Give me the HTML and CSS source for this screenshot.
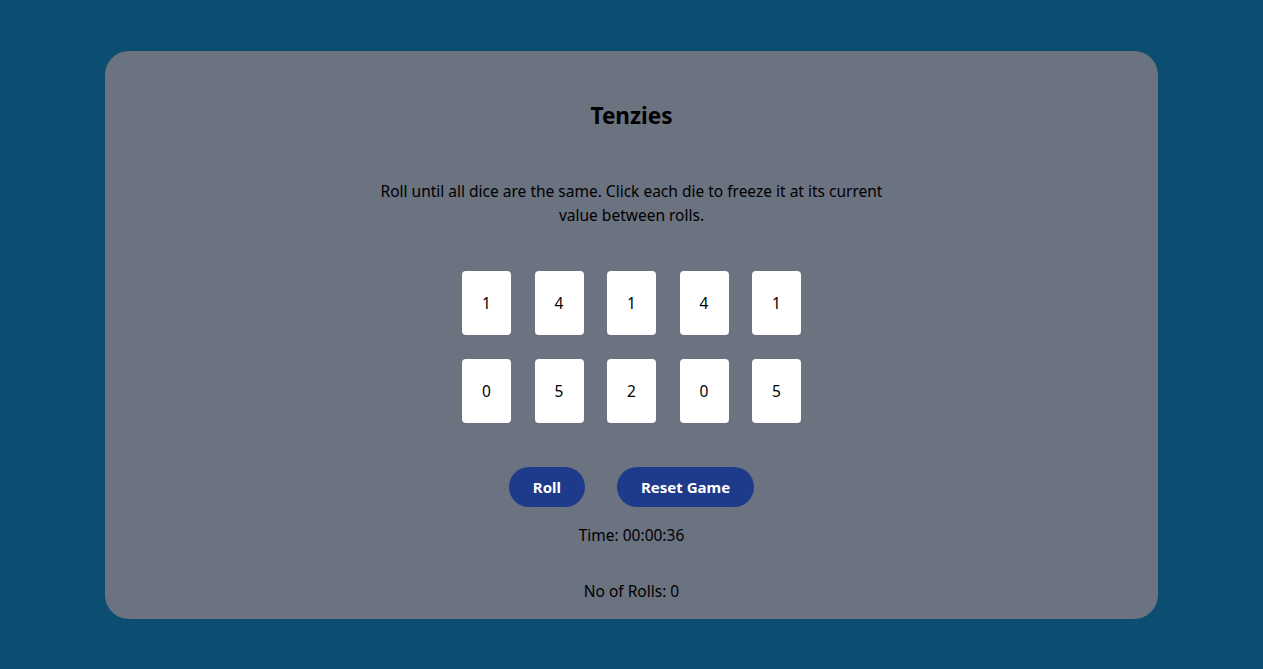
FILE: index.html
```html
<!DOCTYPE html>
<html lang="en">

<head>
    <meta charset="UTF-8">
    <meta name="viewport" content="width=device-width, initial-scale=1.0">
    <title>Tenzies</title>
    <link rel="stylesheet" href="styles.css">
</head>

<body>
    <main class="board">
        <h1 class="title">Tenzies</h1>
        <p class="intro">Roll until all dice are the same. Click each die to freeze it at its current value between rolls.</p>
        <div class="dice">
            <div class="die">1</div>
            <div class="die">4</div>
            <div class="die">1</div>
            <div class="die">4</div>
            <div class="die">1</div>
            <div class="die">0</div>
            <div class="die">5</div>
            <div class="die">2</div>
            <div class="die">0</div>
            <div class="die">5</div>
        </div>
        <div class="actions">
            <button class="btn">Roll</button>
            <button class="btn">Reset Game</button>
        </div>
        <p class="stat">Time: 00:00:36</p>
        <p class="stat rolls">No of Rolls: 0</p>
    </main>
</body>

</html>
```

FILE: styles.css
```css
* {
    box-sizing: border-box;
}

body {
    margin: 0;
    padding: 51px 105px 50px;
    background-color: #0c4e72;
    font-family: "Noto Sans", "Open Sans", sans-serif;
    color: #000000;
}

.board {
    height: 568px;
    background-color: #6b7280;
    border-radius: 24px;
    display: flex;
    flex-direction: column;
    align-items: center;
    padding-top: 50px;
}

.title {
    margin: 0;
    font-size: 22.5px;
    line-height: 30px;
    font-weight: 700;
}

.intro {
    margin: 48px 0 0;
    max-width: 530px;
    text-align: center;
    font-size: 15.5px;
    line-height: 24px;
}

.dice {
    margin-top: 44px;
    display: grid;
    grid-template-columns: repeat(5, 49px);
    column-gap: 23.5px;
    row-gap: 24px;
}

.die {
    height: 64px;
    background-color: #ffffff;
    border-radius: 4px;
    display: flex;
    align-items: center;
    justify-content: center;
    font-size: 15.5px;
}

.actions {
    margin-top: 44px;
    display: flex;
    gap: 32px;
}

.btn {
    height: 40px;
    padding: 0 24px;
    border: none;
    border-radius: 20px;
    background-color: #1e3a8a;
    color: #ffffff;
    font-family: inherit;
    font-size: 15px;
    font-weight: 700;
}

.stat {
    margin: 16px 0 0;
    font-size: 15.5px;
    line-height: 24px;
}

.rolls {
    margin-top: 32px;
}
```
